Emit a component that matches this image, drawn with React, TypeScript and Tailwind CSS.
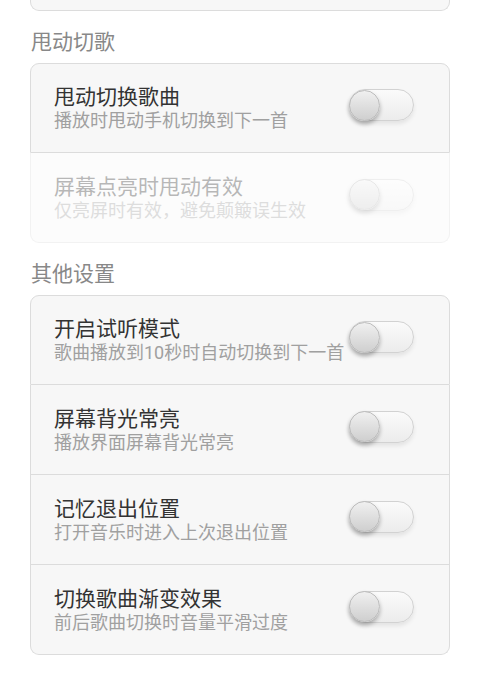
const font = { fontFamily: 'Roboto, "Noto Sans CJK SC", sans-serif' };

type Item = { title: string; sub: string; disabled?: boolean };

const shake: Item[] = [
    { title: '甩动切换歌曲', sub: '播放时甩动手机切换到下一首' },
    { title: '屏幕点亮时甩动有效', sub: '仅亮屏时有效，避免颠簸误生效', disabled: true },
];

const other: Item[] = [
    { title: '开启试听模式', sub: '歌曲播放到10秒时自动切换到下一首' },
    { title: '屏幕背光常亮', sub: '播放界面屏幕背光常亮' },
    { title: '记忆退出位置', sub: '打开音乐时进入上次退出位置' },
    { title: '切换歌曲渐变效果', sub: '前后歌曲切换时音量平滑过度' },
];

function Toggle() {
    return (
        <div className="mb-[6px] flex h-[32px] w-[65px] shrink-0 items-center rounded-full border border-[#d2d2d2] bg-gradient-to-b from-[#fbfbfb] to-[#ececec] shadow-[0_3px_4px_rgba(0,0,0,0.08)]">
            <div className="ml-[-1px] h-[31px] w-[31px] rounded-full border border-[#bcbcbc] bg-gradient-to-b from-[#f0f0f0] to-[#cfcfcf] shadow-[0_3px_4px_rgba(0,0,0,0.28)]" />
        </div>
    );
}

function Card({ items }: { items: Item[] }) {
    return (
        <div className="mx-[30px] flex flex-col">
            {items.map((it, i) => (
                <div
                    key={it.title}
                    className={
                        'flex h-[90px] items-center border-x border-b border-[#dcdcdc] bg-[#f7f7f7] pl-[23px] pr-[35px] ' +
                        (i === 0 ? 'rounded-t-[9px] border-t ' : '') +
                        (i === items.length - 1 ? 'rounded-b-[9px] ' : '') +
                        (it.disabled ? 'opacity-35' : '')
                    }
                >
                    <div className="flex flex-1 flex-col">
                        <div className="text-[21px] leading-[26px] text-[#333]">{it.title}</div>
                        <div className="text-[18px] leading-[22px] text-[#a0a0a0]">{it.sub}</div>
                    </div>
                    <Toggle />
                </div>
            ))}
        </div>
    );
}

export default function App() {
    return (
        <div className="min-h-[685px] w-[480px] bg-white" style={font}>
            <div className="mx-[30px] h-[11px] rounded-b-[9px] border-x border-b border-[#dcdcdc] bg-[#f7f7f7]" />
            <div className="mt-[16px] mb-[6px] pl-[31px] text-[21px] leading-[30px] text-[#888]">甩动切歌</div>
            <Card items={shake} />
            <div className="mt-[16px] mb-[6px] pl-[31px] text-[21px] leading-[30px] text-[#888]">其他设置</div>
            <Card items={other} />
        </div>
    );
}
